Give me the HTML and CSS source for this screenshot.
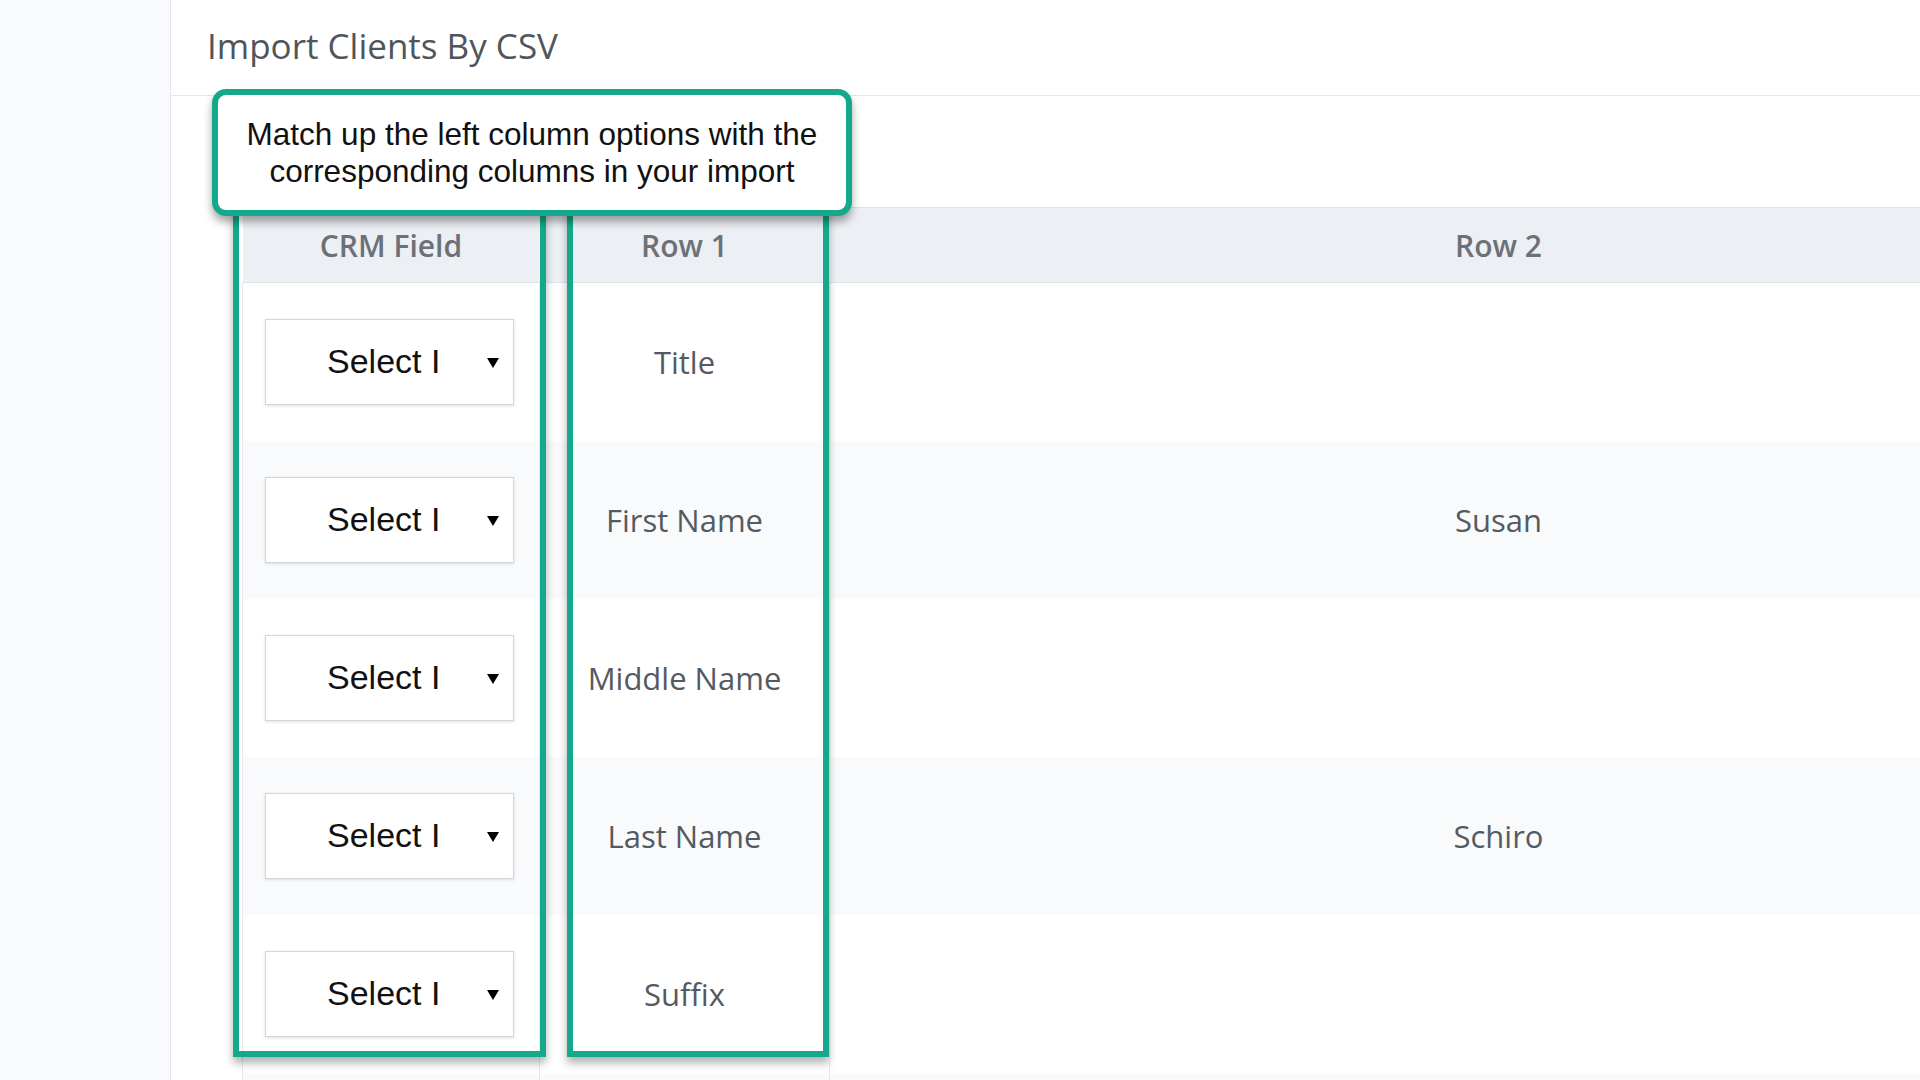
FILE: index.html
```html
<!DOCTYPE html>
<html lang="en">
<head>
    <meta charset="UTF-8">
    <title>Import Clients By CSV</title>
    <link rel="stylesheet" href="styles.css">
</head>
<body>
    <div class="app">
        <div class="sidebar"></div>
        <div class="main">
            <div class="page-header">
                <h1>Import Clients By CSV</h1>
            </div>
            <div class="content">
                <table class="map-table">
                    <thead>
                        <tr>
                            <th class="col-field">CRM Field</th>
                            <th class="col-row1">Row 1</th>
                            <th class="col-row2">Row 2</th>
                        </tr>
                    </thead>
                    <tbody>
                        <tr>
                            <td><div class="fake-select">Select I<span class="caret"></span></div></td>
                            <td>Title</td>
                            <td></td>
                        </tr>
                        <tr>
                            <td><div class="fake-select">Select I<span class="caret"></span></div></td>
                            <td>First Name</td>
                            <td>Susan</td>
                        </tr>
                        <tr>
                            <td><div class="fake-select">Select I<span class="caret"></span></div></td>
                            <td>Middle Name</td>
                            <td></td>
                        </tr>
                        <tr>
                            <td><div class="fake-select">Select I<span class="caret"></span></div></td>
                            <td>Last Name</td>
                            <td>Schiro</td>
                        </tr>
                        <tr>
                            <td><div class="fake-select">Select I<span class="caret"></span></div></td>
                            <td>Suffix</td>
                            <td></td>
                        </tr>
                        <tr>
                            <td></td>
                            <td></td>
                            <td></td>
                        </tr>
                    </tbody>
                </table>
            </div>
        </div>
    </div>

    <!-- annotation overlays -->
    <div class="hl-box hl-field"></div>
    <div class="hl-box hl-row1"></div>
    <div class="callout">Match up the left column options with the<br>corresponding columns in your import</div>
</body>
</html>
```

FILE: styles.css
```css
html, body {
    margin: 0;
    height: 100%;
    overflow: hidden;
    background: #fff;
    font-family: "Open Sans", "Liberation Sans", sans-serif;
}

.app {
    display: flex;
    height: 100vh;
}

/* left nav strip */
.sidebar {
    width: 170px;
    flex-shrink: 0;
    background: #f9fafc;
    border-right: 1px solid #e3e6ea;
}

.main {
    flex: 1;
    overflow: hidden;
}

.page-header {
    height: 96px;
    border-bottom: 1px solid #e4e7eb;
    display: flex;
    align-items: center;
    padding: 0 0 4px 36px;
    box-sizing: border-box;
}

.page-header h1 {
    margin: 0;
    font-size: 35px;
    font-weight: 400;
    color: #50555c;
}

.content {
    padding: 111px 0 0 71px;
}

/* mapping table */
.map-table {
    border-collapse: collapse;
    table-layout: fixed;
    width: 1925px;
}

.col-field { width: 297px; }
.col-row1 { width: 290px; }
.col-row2 { width: 1338px; }

.map-table th {
    height: 74px;
    background: #eceff3;
    border-top: 1px solid #e0e4e8;
    border-bottom: 1px solid #e0e4e8;
    font-size: 30px;
    font-weight: 600;
    color: #6c7178;
    text-align: center;
    padding: 0;
}

.map-table td {
    height: 158px;
    padding: 0;
    text-align: center;
    font-size: 31px;
    color: #555a61;
    border-left: 1px solid #e6e8ec;
    border-right: 1px solid #e6e8ec;
}

.map-table tbody tr:nth-child(even) td {
    background: #f9fafc;
}

.fake-select {
    position: relative;
    width: 249px;
    height: 86px;
    margin-left: 22px;
    box-sizing: border-box;
    background: #fff;
    border: 1px solid #d2d6dc;
    box-shadow: 0 1px 3px rgba(0, 0, 0, 0.12);
    font-family: "Liberation Sans", Arial, sans-serif;
    font-size: 34px;
    color: #111;
    text-align: left;
    padding-left: 61px;
    line-height: 82px;
}

.caret {
    position: absolute;
    right: 14px;
    top: 38px;
    width: 0;
    height: 0;
    border-left: 6px solid transparent;
    border-right: 6px solid transparent;
    border-top: 10px solid #000;
}

/* green highlight frames */
.hl-box {
    position: absolute;
    top: 204px;
    height: 853px;
    box-sizing: border-box;
    border: 6px solid #14a98b;
    box-shadow: 0 6px 8px rgba(0, 0, 0, 0.3);
    z-index: 2;
}

.hl-field {
    left: 233px;
    width: 313px;
}

.hl-row1 {
    left: 567px;
    width: 262px;
}

.callout {
    position: absolute;
    left: 212px;
    top: 89px;
    width: 640px;
    height: 127px;
    box-sizing: border-box;
    border: 6px solid #14a98b;
    border-radius: 14px;
    background: #fff;
    box-shadow: 0 6px 8px rgba(0, 0, 0, 0.35);
    z-index: 3;
    font-family: "Liberation Sans", Arial, sans-serif;
    font-size: 31.5px;
    line-height: 37px;
    color: #111;
    text-align: center;
    padding-top: 21px;
}
```
